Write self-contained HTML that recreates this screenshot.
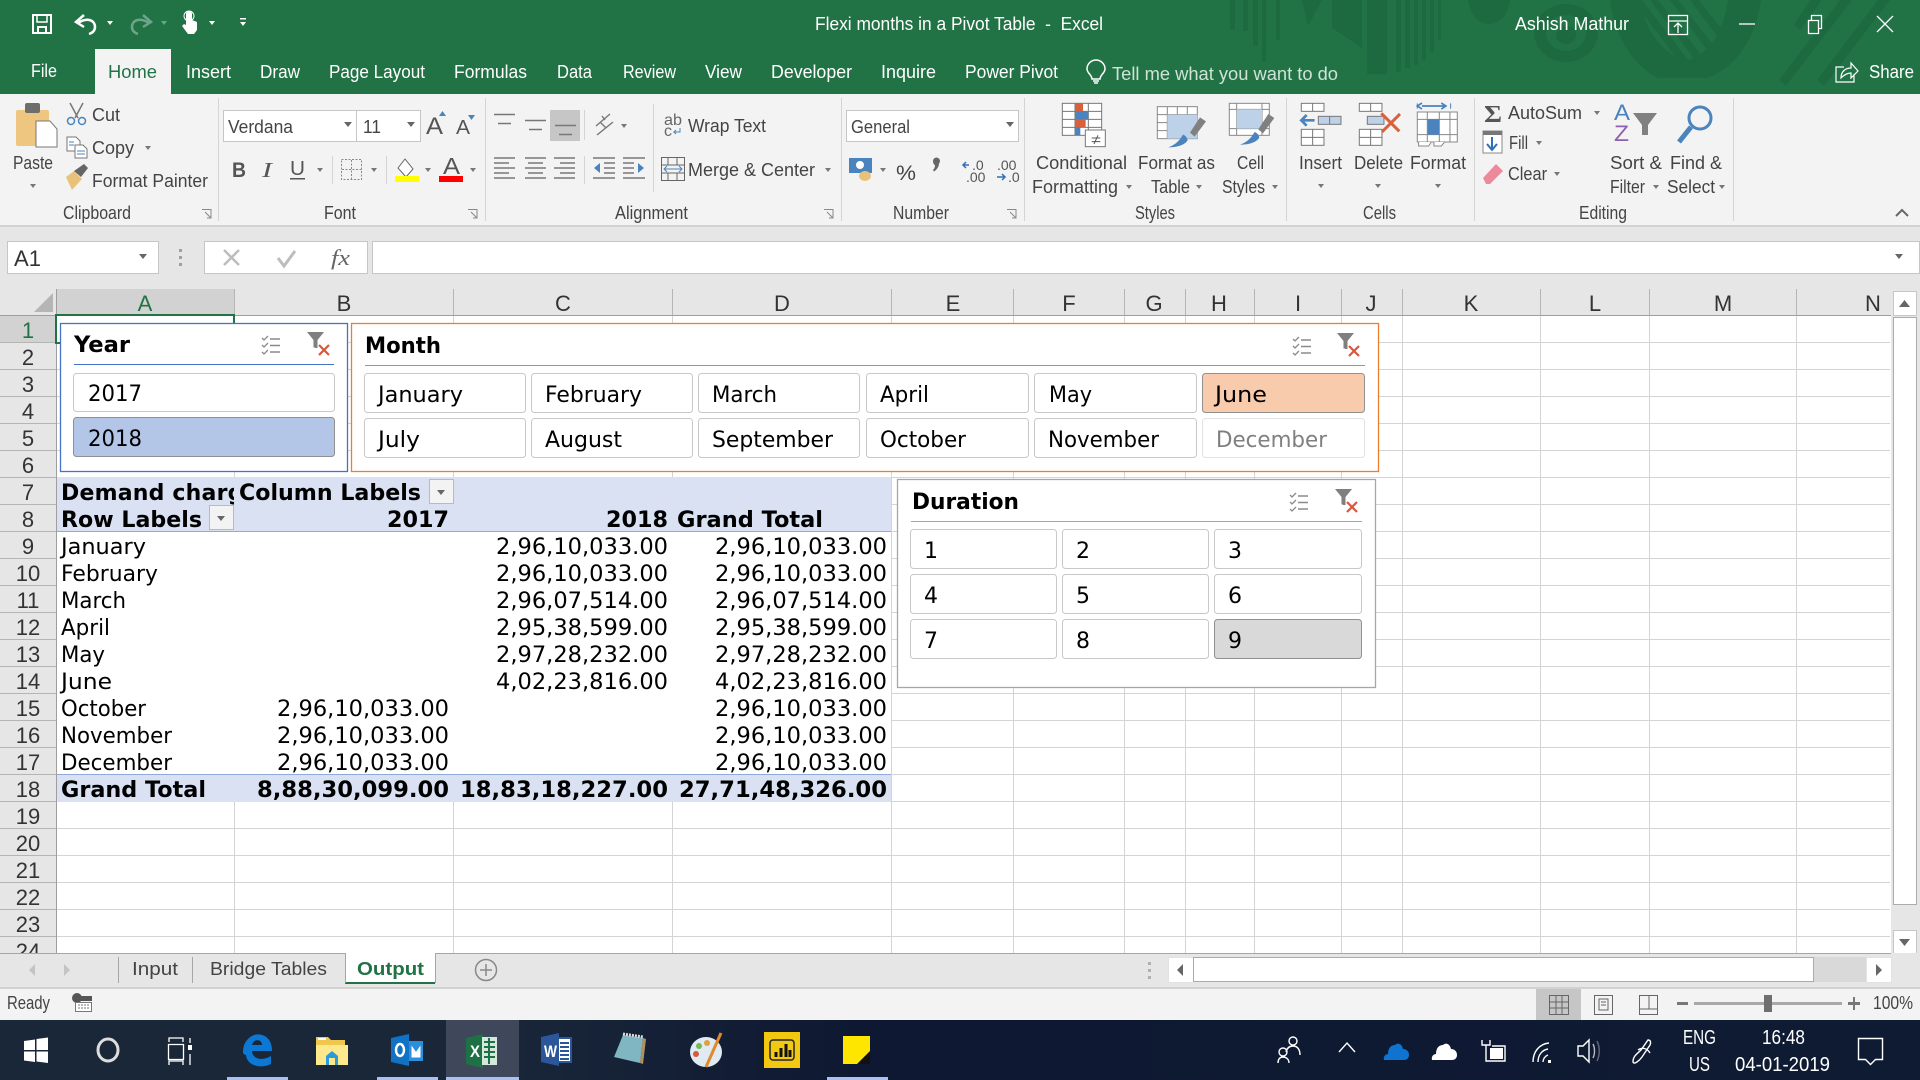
<!DOCTYPE html>
<html lang="en"><head><meta charset="utf-8"><title>Flexi months in a Pivot Table - Excel</title>
<style>
html,body{margin:0;padding:0;width:1920px;height:1080px;overflow:hidden;background:#fff}
svg{display:block;position:absolute;left:0;top:0}
text{white-space:pre}
.u{font:18px "Liberation Sans",sans-serif;fill:#444}
.w{font:18px "Liberation Sans",sans-serif;fill:#fff}
.t{font:20px "Liberation Sans",sans-serif;fill:#fff}
.h{font:22px "Liberation Sans",sans-serif;fill:#333}
.v{font:22px "DejaVu Sans",sans-serif;fill:#000}
.b{font:bold 22px "DejaVu Sans",sans-serif;fill:#000}
.ar{fill:#666}
</style></head><body>
<svg width="1920" height="1080" viewBox="0 0 1920 1080" xmlns="http://www.w3.org/2000/svg">
<defs>
<clipPath id="cA"><rect x="58" y="480" width="176" height="27"/></clipPath>
<clipPath id="cT"><rect x="0" y="0" width="1920" height="94"/></clipPath>
<g id="ck" fill="none" stroke="#8a8a8a" stroke-width="1.3"><path d="M0 3l2 2 4-4M0 10l2 2 4-4M0 17l2 2 4-4"/><path d="M8 4h10M8 10.500h10M8 17h10" stroke-width="1.500"/></g>
<g id="fx"><path d="M0 0h17l-6.500 8v8h-4v-8z" fill="#7f7f7f"/><path d="M5 8v8h3" fill="none" stroke="#fff" stroke-width="1"/><path d="M12 13l10 10M22 13l-10 10" stroke="#d9583b" stroke-width="2.200" fill="none"/></g>
<g id="dn"><path d="M0 0h8l-4 5z"/></g>
<g id="sd"><path d="M0 0h6l-3 4z" fill="#777"/></g>
<g id="sw"><path d="M0 0h6l-3 4z" fill="#fff"/></g>
</defs>

<!-- title bar -->
<rect width="1920" height="94" fill="#217346"/>
<g clip-path="url(#cT)" fill="#1e6a40">
<rect x="1230" y="0" width="5" height="30"/><rect x="1243" y="0" width="5" height="31"/><rect x="1253" y="0" width="5" height="46"/><rect x="1262" y="0" width="4" height="62"/><rect x="1276" y="0" width="4" height="40"/>
<path d="M1302 0h20l-14 26zM1332 0h30v48l-30-20z"/><rect x="1367" y="0" width="20" height="74"/>
<rect x="1396" y="0" width="5" height="72"/><rect x="1405" y="0" width="5" height="68"/><rect x="1414" y="0" width="4" height="65"/><rect x="1422" y="0" width="4" height="60"/><rect x="1430" y="0" width="4" height="52"/><rect x="1438" y="0" width="3" height="40"/>
<path d="M1468 0h42c-2 16-10 24-21 24s-19-9-21-24z"/>
<path fill-rule="evenodd" d="M1566 4a32 29 0 1 0 .1 0zM1566 15a20 18 0 1 1-.1 0zM1566 26a10 9 0 1 0 .1 0z"/>
<path d="M1610 0h30c5 28 18 50 45 61 27-8 38-30 43-61h33c-5 40-27 68-53 78h-50c-24-12-44-42-48-78z"/>
<path d="M1632 0h10l60 78h-10zM1650 0h8l52 66-6 6zM1670 0h8l44 56-6 6zM1690 0h9l36 46-6 6z"/>
<path d="M1810 0h12l-22 30-6-5zM1840 0h12l-66 86-7-6zM1878 0h12l-66 86-7-6z"/>
</g>
<!-- QAT -->
<g fill="none" stroke="#fff" stroke-width="2">
<path d="M33 15h18v18h-18zM38 33v-6h8v6"/><rect x="37" y="15" width="10" height="7" stroke-width="1.500"/>
<path d="M78 23c9-6 17-3 17 4 0 4-3 6-6 7" stroke-width="2.500"/><path d="M84 15l-8 7 8 5" stroke-width="2.500"/>
<g stroke="#6da58a"><path d="M149 23c-9-6-17-3-17 4 0 4 3 6 6 7" stroke-width="2.500"/><path d="M143 15l8 7-8 5" stroke-width="2.500"/></g>
</g>
<path d="M186 14a3 3 0 0 1 6 0v6l5 2v8l-3 4h-6l-6-8 2-2 2 1z" fill="#fff"/><circle cx="189" cy="16" r="5" fill="none" stroke="#fff"/>
<use href="#sw" x="107" y="21"/><use href="#sw" x="209" y="21"/><use href="#sw" x="240" y="22"/><rect x="240" y="18" width="6" height="1.500" fill="#fff"/>
<use href="#sw" x="161" y="21" opacity=".35"/>
<text class="w" x="815" y="30" textLength="288" lengthAdjust="spacingAndGlyphs">Flexi months in a Pivot Table  -  Excel</text>
<text class="w" x="1515" y="30" textLength="114" lengthAdjust="spacingAndGlyphs">Ashish Mathur</text>
<g fill="none" stroke="#fff" stroke-width="1.300">
<rect x="1668.500" y="15.500" width="19" height="19"/><path d="M1669 21h18M1678 33v-9M1674 27l4-4 4 4"/>
<path d="M1739 24h16"/>
<path d="M1808.500 20.500h10v13h-10zM1811.500 20v-4.500h10v13h-3"/>
<path d="M1877 16l16 16M1893 16l-16 16"/>
</g>
<!-- tabs -->
<rect x="95" y="49" width="76" height="45" fill="#f3f3f3"/>
<g class="tabs">
<text class="w" x="31" y="77" textLength="26" lengthAdjust="spacingAndGlyphs">File</text>
<text class="u" x="108" y="78" textLength="49" lengthAdjust="spacingAndGlyphs" style="fill:#217346">Home</text>
<text class="w" x="186" y="78" textLength="45" lengthAdjust="spacingAndGlyphs">Insert</text>
<text class="w" x="260" y="78" textLength="40" lengthAdjust="spacingAndGlyphs">Draw</text>
<text class="w" x="329" y="78" textLength="96" lengthAdjust="spacingAndGlyphs">Page Layout</text>
<text class="w" x="454" y="78" textLength="73" lengthAdjust="spacingAndGlyphs">Formulas</text>
<text class="w" x="557" y="78" textLength="35" lengthAdjust="spacingAndGlyphs">Data</text>
<text class="w" x="623" y="78" textLength="53" lengthAdjust="spacingAndGlyphs">Review</text>
<text class="w" x="705" y="78" textLength="37" lengthAdjust="spacingAndGlyphs">View</text>
<text class="w" x="771" y="78" textLength="81" lengthAdjust="spacingAndGlyphs">Developer</text>
<text class="w" x="881" y="78" textLength="55" lengthAdjust="spacingAndGlyphs">Inquire</text>
<text class="w" x="965" y="78" textLength="93" lengthAdjust="spacingAndGlyphs">Power Pivot</text>
<text class="w" x="1112" y="80" textLength="226" lengthAdjust="spacingAndGlyphs" style="fill:#cfe3d7">Tell me what you want to do</text>
<text class="w" x="1869" y="78" textLength="45" lengthAdjust="spacingAndGlyphs">Share</text>
</g>
<g fill="none" stroke="#fff" stroke-width="1.500">
<path d="M1092 79c0-4-5-6-5-10a9 9 0 0 1 18 0c0 4-5 6-5 10zM1093 81h6M1094 83h4"/>
<path d="M1844 67h-8v15h18v-8M1841 78c0-7 5-10 10-10v-5l7 8-7 7v-5c-4 0-7 2-10 5z" stroke-width="1.200"/>
</g>

<!-- ribbon -->
<rect y="94" width="1920" height="131" fill="#f3f3f3"/>
<rect y="225" width="1920" height="2" fill="#d2d2d2"/>
<g fill="#d4d4d4">
<rect x="218" y="98" width="1" height="123"/><rect x="485" y="98" width="1" height="123"/><rect x="841" y="98" width="1" height="123"/><rect x="1024" y="98" width="1" height="123"/><rect x="1286" y="98" width="1" height="123"/><rect x="1474" y="98" width="1" height="123"/><rect x="1733" y="98" width="1" height="123"/>
<rect x="584" y="110" width="1" height="30"/><rect x="653" y="104" width="1" height="88"/><rect x="332" y="156" width="1" height="28"/><rect x="386" y="156" width="1" height="28"/><rect x="584" y="156" width="1" height="28"/>
</g>
<!-- clipboard -->
<rect x="16" y="110" width="33" height="36" rx="2" fill="#efc67f"/><rect x="25" y="103" width="15" height="10" rx="2" fill="#6d6d6d"/>
<path d="M36 121h14l7 8v18h-21z" fill="#fff" stroke="#777"/>
<text class="u" x="13" y="169" textLength="40" lengthAdjust="spacingAndGlyphs">Paste</text><use href="#sd" x="30" y="184"/>
<g fill="none" stroke="#777" stroke-width="1.500"><path d="M70 103l8 15M83 103l-8 15"/></g>
<g fill="none" stroke="#4a83bd" stroke-width="1.500"><circle cx="71" cy="121" r="3.500"/><circle cx="82" cy="121" r="3.500"/></g>
<text class="u" x="92" y="121" textLength="28" lengthAdjust="spacingAndGlyphs">Cut</text>
<g fill="#fff" stroke="#777"><path d="M67 137h9l4 4v10h-13z"/><path d="M75 145h8l4 4v9h-12z"/></g><path d="M69 142h5M69 145h5M77 151h8M77 154h8" stroke="#4a83bd"/>
<text class="u" x="92" y="154" textLength="42" lengthAdjust="spacingAndGlyphs">Copy</text><use href="#sd" x="145" y="146"/>
<path d="M66 177l8-6 8 8-10 11z" fill="#e8c27a"/><path d="M74 171l10-7 4 4-7 9z" fill="#666"/>
<text class="u" x="92" y="187" textLength="116" lengthAdjust="spacingAndGlyphs">Format Painter</text>
<text class="u" x="63" y="219" textLength="68" lengthAdjust="spacingAndGlyphs">Clipboard</text>
<g fill="none" stroke="#888"><path d="M202 209.500h9v9M205 212l6 6M211 214v4h-4"/><path d="M468 209.500h9v9M471 212l6 6M477 214v4h-4"/><path d="M824 209.500h9v9M827 212l6 6M833 214v4h-4"/><path d="M1007 209.500h9v9M1010 212l6 6M1016 214v4h-4"/></g>
<!-- font -->
<rect x="223.500" y="110.500" width="133" height="31" fill="#fff" stroke="#c6c6c6"/><rect x="356.500" y="110.500" width="64" height="31" fill="#fff" stroke="#c6c6c6"/>
<text class="u" x="228" y="133" textLength="65" lengthAdjust="spacingAndGlyphs">Verdana</text><text class="u" x="363" y="133" textLength="18" lengthAdjust="spacingAndGlyphs">11</text>
<use href="#dn" x="344" y="122" class="ar"/><use href="#dn" x="407" y="122" class="ar"/>
<text x="426" y="134" style="font:24px 'Liberation Sans',sans-serif;fill:#555" textLength="17" lengthAdjust="spacingAndGlyphs">A</text><path d="M439 116h7l-3.500-5z" fill="#4a83bd"/>
<text x="456" y="134" style="font:20px 'Liberation Sans',sans-serif;fill:#555" textLength="14" lengthAdjust="spacingAndGlyphs">A</text><path d="M468 115h7l-3.500 5z" fill="#4a83bd"/>
<text x="232" y="177" style="font:bold 21px 'Liberation Sans',sans-serif;fill:#555" textLength="14" lengthAdjust="spacingAndGlyphs">B</text>
<text x="262" y="177" style="font:italic 21px 'Liberation Serif',serif;fill:#555" textLength="10" lengthAdjust="spacingAndGlyphs">I</text>
<text x="290" y="175" style="font:20px 'Liberation Sans',sans-serif;fill:#555" textLength="15" lengthAdjust="spacingAndGlyphs">U</text><rect x="290" y="178" width="15" height="1.500" fill="#555"/>
<use href="#sd" x="317" y="168"/><use href="#sd" x="371" y="168"/><use href="#sd" x="425" y="168"/><use href="#sd" x="470" y="168"/>
<path d="M341.500 159.500h20v20h-20zM351.500 160v20M342 169.500h20" fill="none" stroke="#888" stroke-dasharray="2 1.500"/>
<path d="M398 168l7-9 8 10-7 8z" fill="#fff" stroke="#666"/><rect x="395" y="176" width="24" height="6" fill="#ff0"/>
<text x="443" y="174" style="font:23px 'Liberation Sans',sans-serif;fill:#555" textLength="17" lengthAdjust="spacingAndGlyphs">A</text><rect x="439" y="176" width="24" height="6" fill="#f00"/>
<text class="u" x="324" y="219" textLength="32" lengthAdjust="spacingAndGlyphs">Font</text>
<!-- alignment -->
<rect x="550" y="110" width="30" height="31" fill="#c6c6c6"/>
<g stroke="#777" stroke-width="1.400" fill="none">
<path d="M494 114.500h21M498 123.500h13"/><path d="M525 120.500h21M529 129.500h13"/><path d="M555 125.500h21M559 134.500h13"/>
<path d="M494 158h21M494 163h15M494 168h21M494 173h15M494 178h21"/><path d="M525 158h21M528 163h15M525 168h21M528 173h15M525 178h21"/><path d="M554 158h21M560 163h15M554 168h21M560 173h15M554 178h21"/>
<path d="M593 158h22M604 163h11M604 168h11M604 173h11M593 178h22"/><path d="M623 158h22M623 163h11M623 168h11M623 173h11M623 178h22"/>
<path d="M596 126l14-12M600 122l6 6M597 135l16-13M602 116l3 4"/>
<path d="M661.500 157.500h23v23h-23zM661 165h24M661 173h24M668 158v7M677 158v7M668 173v7M677 173v7" stroke="#666" stroke-width="1"/>
</g>
<path d="M594 168l6-5v10zM644 168l-6-5v10z" fill="#4a83bd"/>
<path d="M664 169h18M667 166l-3 3 3 3M679 166l3 3-3 3" stroke="#4a83bd" fill="none"/>
<use href="#sd" x="621" y="124"/><use href="#sd" x="825" y="168"/>
<text x="664" y="125" style="font:16px 'Liberation Sans',sans-serif;fill:#666" textLength="18" lengthAdjust="spacingAndGlyphs">ab</text><text x="664" y="136" style="font:16px 'Liberation Sans',sans-serif;fill:#666">c</text><path d="M680 128v4h-6l2-2m-2 2l2 2" stroke="#4a83bd" fill="none"/>
<text class="u" x="688" y="132" textLength="78" lengthAdjust="spacingAndGlyphs">Wrap Text</text>
<text class="u" x="688" y="176" textLength="127" lengthAdjust="spacingAndGlyphs">Merge &amp; Center</text>
<text class="u" x="615" y="219" textLength="73" lengthAdjust="spacingAndGlyphs">Alignment</text>
<!-- number -->
<rect x="846.500" y="110.500" width="172" height="31" fill="#fff" stroke="#c6c6c6"/>
<text class="u" x="851" y="133" textLength="59" lengthAdjust="spacingAndGlyphs">General</text><use href="#dn" x="1006" y="122" class="ar"/>
<rect x="849" y="158" width="23" height="15" fill="#4a83bd"/><circle cx="860" cy="165" r="4" fill="#fff"/><ellipse cx="865" cy="176" rx="6" ry="5" fill="#e8c27a"/>
<use href="#sd" x="880" y="168"/>
<text class="u" x="896" y="180" textLength="20" lengthAdjust="spacingAndGlyphs" style="font-size:21px">%</text>
<path d="M933 161a3.500 3.500 0 1 1 6 2.500c0 3-2 6-5 8l-1-1.500c1.500-1.500 2-3 2-5-1 0-2-2-2-4z" fill="#666"/>
<text x="972" y="170" style="font:14px 'Liberation Sans',sans-serif;fill:#555">.0</text><text x="966" y="182" style="font:14px 'Liberation Sans',sans-serif;fill:#555">.00</text>
<path d="M969 165h-5m2-3l-3 3 3 3" stroke="#2f6fb5" stroke-width="1.500" fill="none"/>
<text x="997" y="170" style="font:14px 'Liberation Sans',sans-serif;fill:#555">.00</text><text x="1008" y="182" style="font:14px 'Liberation Sans',sans-serif;fill:#555">.0</text>
<path d="M997 177h8m-3-3l3 3-3 3" stroke="#2f6fb5" stroke-width="1.500" fill="none"/>
<text class="u" x="893" y="219" textLength="56" lengthAdjust="spacingAndGlyphs">Number</text>
<!-- styles -->
<g transform="translate(1020 94) scale(.3333)">
<g fill="#fff" stroke="#777" stroke-width="3"><rect x="127" y="28" width="118" height="96"/><path d="M127 52h118M127 76h118M127 100h118M165 28v96M205 28v96" fill="none"/></g>
<rect x="165" y="28" width="24" height="24" fill="#d9603d"/><rect x="165" y="52" width="40" height="24" fill="#4a83bd"/><rect x="165" y="76" width="32" height="24" fill="#d9603d"/><rect x="165" y="100" width="16" height="24" fill="#4a83bd"/>
<rect x="196" y="108" width="60" height="50" fill="#fff" stroke="#777" stroke-width="3"/><path d="M215 143h26M215 132h26M222 150l12-26" stroke="#555" stroke-width="3"/>
<g fill="#fff" stroke="#888" stroke-width="3"><rect x="412" y="38" width="120" height="96"/><path d="M412 62h120M412 86h120M412 110h120M442 38v96M472 38v96M502 38v96" fill="none"/></g>
<rect x="442" y="62" width="90" height="72" fill="#bdd1e8"/>
<path d="M540 70l18 12-34 46-14-12z" fill="#808080"/><path d="M445 160c16-6 30-14 44-38 8 2 12 10 14 16-6 14-30 22-58 22z" fill="#4a83bd"/>
<g fill="#fff" stroke="#888" stroke-width="3"><rect x="628" y="28" width="120" height="96"/><path d="M628 46h120M650 28v96M726 28v96M628 104h120" fill="none"/></g>
<rect x="650" y="46" width="76" height="58" fill="#bdd1e8"/>
<path d="M745 60l18 12-34 46-14-12z" fill="#808080"/><path d="M660 152c16-6 30-14 44-38 8 2 12 10 14 16-6 14-30 22-58 22z" fill="#4a83bd"/>
<g fill="#fff" stroke="#777" stroke-width="3"><rect x="844" y="28" width="68" height="24"/><path d="M878 28v24" fill="none"/><rect x="844" y="106" width="68" height="48"/><path d="M878 106v48M844 130h68" fill="none"/></g>
<rect x="895" y="67" width="68" height="24" fill="#bdd1e8" stroke="#777" stroke-width="3"/><path d="M929 67v24" stroke="#777" stroke-width="3"/>
<path d="M884 79h-38m14-16l-16 16 16 16" fill="none" stroke="#4a83bd" stroke-width="8"/>
<g fill="#fff" stroke="#777" stroke-width="3"><rect x="1018" y="28" width="68" height="24"/><path d="M1052 28v24" fill="none"/><rect x="1018" y="106" width="68" height="48"/><path d="M1052 106v48M1018 130h68" fill="none"/></g>
<rect x="1042" y="67" width="50" height="24" fill="#bdd1e8" stroke="#777" stroke-width="3"/>
<path d="M1084 58l54 54M1140 60l-54 54" stroke="#d9603d" stroke-width="9" fill="none"/>
<path d="M1192 44V28M1292 44V28" stroke="#4a83bd" stroke-width="3"/><path d="M1206 36h72m-14-9l14 9-14 9m-58-18l-14 9 14 9" stroke="#4a83bd" stroke-width="5" fill="none"/>
<g fill="#fff" stroke="#888" stroke-width="3"><rect x="1192" y="54" width="120" height="90"/><path d="M1192 76h120M1192 122h120M1222 54v90M1258 54v90M1290 54v90" fill="none"/></g>
<rect x="1223" y="76" width="35" height="46" fill="#4a83bd"/><path d="M1196 144v12h30l8-12M1242 144v12h22l10-12" fill="#fff" stroke="#888" stroke-width="3"/>
</g>
<text class="u" x="1036" y="169" textLength="91" lengthAdjust="spacingAndGlyphs">Conditional</text>
<text class="u" x="1032" y="193" textLength="86" lengthAdjust="spacingAndGlyphs">Formatting</text><use href="#sd" x="1126" y="185"/>
<text class="u" x="1138" y="169" textLength="77" lengthAdjust="spacingAndGlyphs">Format as</text>
<text class="u" x="1151" y="193" textLength="39" lengthAdjust="spacingAndGlyphs">Table</text><use href="#sd" x="1196" y="185"/>
<text class="u" x="1237" y="169" textLength="27" lengthAdjust="spacingAndGlyphs">Cell</text>
<text class="u" x="1222" y="193" textLength="43" lengthAdjust="spacingAndGlyphs">Styles</text><use href="#sd" x="1272" y="185"/>
<text class="u" x="1135" y="219" textLength="40" lengthAdjust="spacingAndGlyphs">Styles</text>
<!-- cells -->
<text class="u" x="1299" y="169" textLength="43" lengthAdjust="spacingAndGlyphs">Insert</text><use href="#sd" x="1318" y="184"/>
<text class="u" x="1354" y="169" textLength="49" lengthAdjust="spacingAndGlyphs">Delete</text><use href="#sd" x="1375" y="184"/>
<text class="u" x="1410" y="169" textLength="56" lengthAdjust="spacingAndGlyphs">Format</text><use href="#sd" x="1435" y="184"/>
<text class="u" x="1363" y="219" textLength="33" lengthAdjust="spacingAndGlyphs">Cells</text>
<!-- editing -->
<text x="1484" y="122" style="font:bold 24px 'Liberation Serif',serif;fill:#555" textLength="18" lengthAdjust="spacingAndGlyphs">Σ</text>
<text class="u" x="1508" y="119" textLength="74" lengthAdjust="spacingAndGlyphs">AutoSum</text><use href="#sd" x="1594" y="111"/>
<rect x="1483" y="131" width="19" height="22" fill="#fff" stroke="#888"/><rect x="1483" y="131" width="19" height="4" fill="#777"/><path d="M1492 137v12m-5-5l5 6 5-6" stroke="#2f6fb5" stroke-width="2" fill="none"/>
<text class="u" x="1509" y="149" textLength="19" lengthAdjust="spacingAndGlyphs">Fill</text><use href="#sd" x="1536" y="141"/>
<path d="M1483 178l13-14 7 7-13 13h-4z" fill="#ec8a9b"/>
<text class="u" x="1508" y="180" textLength="39" lengthAdjust="spacingAndGlyphs">Clear</text><use href="#sd" x="1554" y="172"/>
<text x="1614" y="120" style="font:22px 'Liberation Sans',sans-serif;fill:#4a83bd" textLength="16" lengthAdjust="spacingAndGlyphs">A</text>
<text x="1614" y="141" style="font:22px 'Liberation Sans',sans-serif;fill:#8f5fb0" textLength="15" lengthAdjust="spacingAndGlyphs">Z</text>
<path d="M1633 113h24l-9 12v10h-6v-10z" fill="#808080"/>
<circle cx="1700" cy="118" r="11" fill="none" stroke="#4a83bd" stroke-width="3"/><path d="M1691 127l-12 15" stroke="#4a83bd" stroke-width="5"/>
<text class="u" x="1610" y="169" textLength="52" lengthAdjust="spacingAndGlyphs">Sort &amp;</text><text class="u" x="1670" y="169" textLength="52" lengthAdjust="spacingAndGlyphs">Find &amp;</text>
<text class="u" x="1610" y="193" textLength="35" lengthAdjust="spacingAndGlyphs">Filter</text><use href="#sd" x="1653" y="185"/>
<text class="u" x="1667" y="193" textLength="48" lengthAdjust="spacingAndGlyphs">Select</text><use href="#sd" x="1719" y="185"/>
<text class="u" x="1579" y="219" textLength="48" lengthAdjust="spacingAndGlyphs">Editing</text>
<path d="M1896 216l6-6 6 6" stroke="#666" stroke-width="2" fill="none"/>

<!-- formula bar -->
<rect y="227" width="1920" height="62" fill="#e6e6e6"/>
<rect x="7.500" y="241.500" width="151" height="32" fill="#fff" stroke="#c6c6c6"/>
<text class="h" x="14" y="266" textLength="27" lengthAdjust="spacingAndGlyphs">A1</text><use href="#dn" x="139" y="254" class="ar"/>
<g fill="#a0a0a0"><rect x="179" y="249" width="3" height="3"/><rect x="179" y="256" width="3" height="3"/><rect x="179" y="263" width="3" height="3"/></g>
<rect x="204.500" y="241.500" width="163" height="32" fill="#fff" stroke="#c6c6c6"/>
<path d="M224 250l15 15M239 250l-15 15" stroke="#bdbdbd" stroke-width="2.500"/><path d="M278 258l6 8 11-15" stroke="#bdbdbd" stroke-width="3" fill="none"/>
<text x="331" y="265" style="font:italic 22px 'Liberation Serif',serif;fill:#666" textLength="19" lengthAdjust="spacingAndGlyphs">fx</text>
<rect x="372.500" y="241.500" width="1547" height="32" fill="#fff" stroke="#c6c6c6"/>
<use href="#dn" x="1895" y="254" class="ar"/>

<!-- sheet -->
<rect x="0" y="289" width="1920" height="664" fill="#fff"/>
<g stroke="#d4d4d4">
<path d="M234.500 316V953M453.500 316V953M672.500 316V953M891.500 316V953M1013.500 316V953M1124.500 316V953M1185.500 316V953M1254.500 316V953M1341.500 316V953M1402.500 316V953M1540.500 316V953M1649.500 316V953M1796.500 316V953"/>
<path d="M57 342.500H1890M57 369.500H1890M57 396.500H1890M57 423.500H1890M57 450.500H1890M57 477.500H1890M57 504.500H1890M57 531.500H1890M57 558.500H1890M57 585.500H1890M57 612.500H1890M57 639.500H1890M57 666.500H1890M57 693.500H1890M57 720.500H1890M57 747.500H1890M57 774.500H1890M57 801.500H1890M57 828.500H1890M57 855.500H1890M57 882.500H1890M57 909.500H1890M57 936.500H1890"/>
</g>
<!-- headers -->
<rect x="0" y="289" width="1891" height="26" fill="#e6e6e6"/><rect x="0" y="289" width="56" height="664" fill="#e6e6e6"/>
<rect x="56" y="289" width="178" height="26" fill="#d2d2d2"/><rect x="0" y="316" width="56" height="27" fill="#d2d2d2"/>
<rect x="0" y="315" width="1891" height="1" fill="#9e9e9e"/><rect x="56" y="289" width="1" height="664" fill="#9e9e9e"/>
<path d="M53 293v19h-19z" fill="#b5b5b5"/>
<g stroke="#b5b5b5"><path d="M234.500 289v26M453.500 289v26M672.500 289v26M891.500 289v26M1013.500 289v26M1124.500 289v26M1185.500 289v26M1254.500 289v26M1341.500 289v26M1402.500 289v26M1540.500 289v26M1649.500 289v26M1796.500 289v26"/>
<path d="M0 342.500h56M0 369.500h56M0 396.500h56M0 423.500h56M0 450.500h56M0 477.500h56M0 504.500h56M0 531.500h56M0 558.500h56M0 585.500h56M0 612.500h56M0 639.500h56M0 666.500h56M0 693.500h56M0 720.500h56M0 747.500h56M0 774.500h56M0 801.500h56M0 828.500h56M0 855.500h56M0 882.500h56M0 909.500h56M0 936.500h56"/></g>
<g text-anchor="middle">
<text class="h" x="145" y="311" style="fill:#217346">A</text><text class="h" x="344" y="311">B</text><text class="h" x="563" y="311">C</text><text class="h" x="782" y="311">D</text><text class="h" x="953" y="311">E</text><text class="h" x="1069" y="311">F</text><text class="h" x="1154" y="311">G</text><text class="h" x="1219" y="311">H</text><text class="h" x="1298" y="311">I</text><text class="h" x="1371" y="311">J</text><text class="h" x="1471" y="311">K</text><text class="h" x="1595" y="311">L</text><text class="h" x="1723" y="311">M</text><text class="h" x="1873" y="311">N</text>
</g>
<g text-anchor="middle" transform="translate(0 1)">
<text class="h" x="28" y="337" style="fill:#217346">1</text><text class="h" x="28" y="364">2</text><text class="h" x="28" y="391">3</text><text class="h" x="28" y="418">4</text><text class="h" x="28" y="445">5</text><text class="h" x="28" y="472">6</text><text class="h" x="28" y="499">7</text><text class="h" x="28" y="526">8</text><text class="h" x="28" y="553">9</text><text class="h" x="28" y="580">10</text><text class="h" x="28" y="607">11</text><text class="h" x="28" y="634">12</text><text class="h" x="28" y="661">13</text><text class="h" x="28" y="688">14</text><text class="h" x="28" y="715">15</text><text class="h" x="28" y="742">16</text><text class="h" x="28" y="769">17</text><text class="h" x="28" y="796">18</text><text class="h" x="28" y="823">19</text><text class="h" x="28" y="850">20</text><text class="h" x="28" y="877">21</text><text class="h" x="28" y="904">22</text><text class="h" x="28" y="931">23</text><text class="h" x="28" y="958">24</text>
</g>
<!-- selected cell -->
<rect x="56" y="315" width="178" height="28" fill="none" stroke="#217346" stroke-width="2"/>

<!-- pivot -->
<rect x="57" y="477" width="834" height="55" fill="#d9e1f2"/>
<rect x="57" y="532" width="834" height="243" fill="#fff"/>
<rect x="57" y="775" width="834" height="27" fill="#d9e1f2"/>
<rect x="57" y="531" width="834" height="1" fill="#8ea9db"/><rect x="57" y="774" width="834" height="1" fill="#8ea9db"/>
<rect x="429.500" y="479.500" width="24" height="24" fill="#f3f3f3" stroke="#b5bac4"/><use href="#dn" x="437" y="490" class="ar"/>
<rect x="209.500" y="505.500" width="24" height="24" fill="#f3f3f3" stroke="#b5bac4"/><use href="#dn" x="217" y="516" class="ar"/>
<g transform="translate(0 1)">
<text class="b" x="61" y="499" clip-path="url(#cA)" style="letter-spacing:.2px">Demand charges</text>
<text class="b" x="239" y="499" textLength="182" lengthAdjust="spacingAndGlyphs">Column Labels</text>
<text class="b" x="61" y="526" textLength="141" lengthAdjust="spacingAndGlyphs">Row Labels</text>
<text class="b" x="387" y="526" textLength="62" lengthAdjust="spacingAndGlyphs">2017</text>
<text class="b" x="606" y="526" textLength="62" lengthAdjust="spacingAndGlyphs">2018</text>
<text class="b" x="677" y="526" textLength="146" lengthAdjust="spacingAndGlyphs">Grand Total</text>

<text class="v" x="61" y="553" textLength="85" lengthAdjust="spacingAndGlyphs">January</text>
<text class="v" x="61" y="580" textLength="97" lengthAdjust="spacingAndGlyphs">February</text>
<text class="v" x="61" y="607" textLength="65" lengthAdjust="spacingAndGlyphs">March</text>
<text class="v" x="61" y="634" textLength="49" lengthAdjust="spacingAndGlyphs">April</text>
<text class="v" x="61" y="661" textLength="44" lengthAdjust="spacingAndGlyphs">May</text>
<text class="v" x="61" y="688" textLength="51" lengthAdjust="spacingAndGlyphs">June</text>
<text class="v" x="61" y="715" textLength="85" lengthAdjust="spacingAndGlyphs">October</text>
<text class="v" x="61" y="742" textLength="111" lengthAdjust="spacingAndGlyphs">November</text>
<text class="v" x="61" y="769" textLength="111" lengthAdjust="spacingAndGlyphs">December</text>
<text class="b" x="61" y="796" textLength="145" lengthAdjust="spacingAndGlyphs">Grand Total</text>

<text class="v" x="496" y="553" textLength="172" lengthAdjust="spacingAndGlyphs">2,96,10,033.00</text><text class="v" x="715" y="553" textLength="172" lengthAdjust="spacingAndGlyphs">2,96,10,033.00</text>
<text class="v" x="496" y="580" textLength="172" lengthAdjust="spacingAndGlyphs">2,96,10,033.00</text><text class="v" x="715" y="580" textLength="172" lengthAdjust="spacingAndGlyphs">2,96,10,033.00</text>
<text class="v" x="496" y="607" textLength="172" lengthAdjust="spacingAndGlyphs">2,96,07,514.00</text><text class="v" x="715" y="607" textLength="172" lengthAdjust="spacingAndGlyphs">2,96,07,514.00</text>
<text class="v" x="496" y="634" textLength="172" lengthAdjust="spacingAndGlyphs">2,95,38,599.00</text><text class="v" x="715" y="634" textLength="172" lengthAdjust="spacingAndGlyphs">2,95,38,599.00</text>
<text class="v" x="496" y="661" textLength="172" lengthAdjust="spacingAndGlyphs">2,97,28,232.00</text><text class="v" x="715" y="661" textLength="172" lengthAdjust="spacingAndGlyphs">2,97,28,232.00</text>
<text class="v" x="496" y="688" textLength="172" lengthAdjust="spacingAndGlyphs">4,02,23,816.00</text><text class="v" x="715" y="688" textLength="172" lengthAdjust="spacingAndGlyphs">4,02,23,816.00</text>
<text class="v" x="277" y="715" textLength="172" lengthAdjust="spacingAndGlyphs">2,96,10,033.00</text><text class="v" x="715" y="715" textLength="172" lengthAdjust="spacingAndGlyphs">2,96,10,033.00</text>
<text class="v" x="277" y="742" textLength="172" lengthAdjust="spacingAndGlyphs">2,96,10,033.00</text><text class="v" x="715" y="742" textLength="172" lengthAdjust="spacingAndGlyphs">2,96,10,033.00</text>
<text class="v" x="277" y="769" textLength="172" lengthAdjust="spacingAndGlyphs">2,96,10,033.00</text><text class="v" x="715" y="769" textLength="172" lengthAdjust="spacingAndGlyphs">2,96,10,033.00</text>
<text class="b" x="257" y="796" textLength="192" lengthAdjust="spacingAndGlyphs">8,88,30,099.00</text>
<text class="b" x="460" y="796" textLength="208" lengthAdjust="spacingAndGlyphs">18,83,18,227.00</text>
<text class="b" x="679" y="796" textLength="208" lengthAdjust="spacingAndGlyphs">27,71,48,326.00</text>
</g>

<!-- Year slicer -->
<rect x="60.500" y="323.500" width="287" height="148" fill="#fff" stroke="#4472c4" stroke-width="1.300"/>
<text class="b" x="74" y="352" textLength="56" lengthAdjust="spacingAndGlyphs">Year</text>
<use href="#ck" x="262" y="335"/><use href="#fx" x="307" y="332"/>
<rect x="74" y="364" width="260" height="1" fill="#4472c4"/>
<rect x="73.500" y="373.500" width="261" height="38" rx="3" fill="#fff" stroke="#c8c8c8"/>
<rect x="73.500" y="417.500" width="261" height="39" rx="3" fill="#b4c6e7" stroke="#909090"/>
<text class="v" x="88" y="401" textLength="54" lengthAdjust="spacingAndGlyphs">2017</text>
<text class="v" x="88" y="446" textLength="54" lengthAdjust="spacingAndGlyphs">2018</text>

<!-- Month slicer -->
<rect x="351.500" y="323.500" width="1027" height="148" fill="#fff" stroke="#ed7d31" stroke-width="1.300"/>
<text class="b" x="365" y="353" textLength="76" lengthAdjust="spacingAndGlyphs">Month</text>
<use href="#ck" x="1293" y="336"/><use href="#fx" x="1337" y="333"/>
<rect x="365" y="365" width="1000" height="1" fill="#ed7d31"/>
<g fill="#fff" stroke="#c8c8c8">
<rect x="364.500" y="373.500" width="161" height="39" rx="3"/><rect x="531.500" y="373.500" width="161" height="39" rx="3"/><rect x="698.500" y="373.500" width="161" height="39" rx="3"/><rect x="866.500" y="373.500" width="162" height="39" rx="3"/><rect x="1034.500" y="373.500" width="162" height="39" rx="3"/>
<rect x="1202.500" y="373.500" width="162" height="39" rx="3" fill="#f8cbad" stroke="#909090"/>
<rect x="364.500" y="418.500" width="161" height="39" rx="3"/><rect x="531.500" y="418.500" width="161" height="39" rx="3"/><rect x="698.500" y="418.500" width="161" height="39" rx="3"/><rect x="866.500" y="418.500" width="162" height="39" rx="3"/><rect x="1034.500" y="418.500" width="162" height="39" rx="3"/>
<rect x="1202.500" y="418.500" width="162" height="39" rx="3" stroke="#e2e2e2"/>
</g>
<text class="v" x="378" y="402" textLength="85" lengthAdjust="spacingAndGlyphs">January</text>
<text class="v" x="545" y="402" textLength="97" lengthAdjust="spacingAndGlyphs">February</text>
<text class="v" x="712" y="402" textLength="65" lengthAdjust="spacingAndGlyphs">March</text>
<text class="v" x="880" y="402" textLength="49" lengthAdjust="spacingAndGlyphs">April</text>
<text class="v" x="1049" y="402" textLength="43" lengthAdjust="spacingAndGlyphs">May</text>
<text class="v" x="1215" y="402" textLength="52" lengthAdjust="spacingAndGlyphs">June</text>
<text class="v" x="378" y="447" textLength="42" lengthAdjust="spacingAndGlyphs">July</text>
<text class="v" x="545" y="447" textLength="77" lengthAdjust="spacingAndGlyphs">August</text>
<text class="v" x="712" y="447" textLength="121" lengthAdjust="spacingAndGlyphs">September</text>
<text class="v" x="880" y="447" textLength="86" lengthAdjust="spacingAndGlyphs">October</text>
<text class="v" x="1048" y="447" textLength="111" lengthAdjust="spacingAndGlyphs">November</text>
<text class="v" x="1216" y="447" textLength="111" lengthAdjust="spacingAndGlyphs" style="fill:#808080">December</text>

<!-- Duration slicer -->
<rect x="897.500" y="479.500" width="478" height="208" fill="#fff" stroke="#a6a6a6" stroke-width="1.300"/>
<text class="b" x="912" y="509" textLength="107" lengthAdjust="spacingAndGlyphs">Duration</text>
<use href="#ck" x="1290" y="492"/><use href="#fx" x="1335" y="489"/>
<rect x="911" y="521" width="451" height="1" fill="#a6a6a6"/>
<g fill="#fff" stroke="#c8c8c8">
<rect x="910.500" y="529.500" width="146" height="39" rx="3"/><rect x="1062.500" y="529.500" width="146" height="39" rx="3"/><rect x="1214.500" y="529.500" width="147" height="39" rx="3"/>
<rect x="910.500" y="574.500" width="146" height="39" rx="3"/><rect x="1062.500" y="574.500" width="146" height="39" rx="3"/><rect x="1214.500" y="574.500" width="147" height="39" rx="3"/>
<rect x="910.500" y="619.500" width="146" height="39" rx="3"/><rect x="1062.500" y="619.500" width="146" height="39" rx="3"/><rect x="1214.500" y="619.500" width="147" height="39" rx="3" fill="#d9d9d9" stroke="#909090"/>
</g>
<text class="v" x="924" y="558">1</text><text class="v" x="1076" y="558">2</text><text class="v" x="1228" y="558">3</text>
<text class="v" x="924" y="603">4</text><text class="v" x="1076" y="603">5</text><text class="v" x="1228" y="603">6</text>
<text class="v" x="924" y="648">7</text><text class="v" x="1076" y="648">8</text><text class="v" x="1228" y="648">9</text>

<!-- v scrollbar -->
<rect x="1891" y="289" width="29" height="664" fill="#e6e6e6"/>
<rect x="1893.500" y="291.500" width="23" height="24" fill="#fff" stroke="#c6c6c6"/><path d="M1899 307h11l-5.500-7z" fill="#666"/>
<rect x="1893.500" y="317.500" width="23" height="587" fill="#fff" stroke="#ababab"/>
<rect x="1893.500" y="930.500" width="23" height="24" fill="#fff" stroke="#c6c6c6"/><path d="M1899 939h11l-5.500 7z" fill="#666"/>

<!-- tab bar -->
<rect y="953" width="1920" height="34" fill="#e6e6e6"/>
<rect y="953" width="1891" height="1" fill="#a6a6a6"/><rect y="987" width="1920" height="2" fill="#d2d2d2"/>
<path d="M35 964l-6 6 6 6zM64 964l6 6-6 6z" fill="#c4c4c4"/>
<rect x="118" y="957" width="1" height="26" fill="#a6a6a6"/><rect x="192" y="957" width="1" height="26" fill="#a6a6a6"/>
<text class="u" x="132" y="975" textLength="46" lengthAdjust="spacingAndGlyphs">Input</text>
<text class="u" x="210" y="975" textLength="117" lengthAdjust="spacingAndGlyphs">Bridge Tables</text>
<rect x="345" y="953" width="90" height="31" fill="#fff"/><rect x="345" y="982" width="90" height="2" fill="#217346"/><rect x="345" y="953" width="1" height="30" fill="#a6a6a6"/><rect x="435" y="953" width="1" height="30" fill="#a6a6a6"/>
<text x="357" y="975" style="font:bold 18px 'Liberation Sans',sans-serif;fill:#217346" textLength="67" lengthAdjust="spacingAndGlyphs">Output</text>
<circle cx="486" cy="970" r="10.500" fill="none" stroke="#888" stroke-width="1.500"/><path d="M480 970h12M486 964v12" stroke="#888" stroke-width="1.500"/>
<g fill="#b0b0b0"><rect x="1148" y="962" width="3" height="3"/><rect x="1148" y="969" width="3" height="3"/><rect x="1148" y="976" width="3" height="3"/></g>
<rect x="1168" y="957" width="723" height="25" fill="#d9d9d9"/>
<rect x="1168.500" y="957.500" width="25" height="25" fill="#fff" stroke="#e2e2e2"/><path d="M1183 964l-6 6 6 6z" fill="#666"/>
<rect x="1193.500" y="957.500" width="620" height="24" fill="#fff" stroke="#ababab"/>
<rect x="1866.500" y="957.500" width="25" height="25" fill="#fff" stroke="#e2e2e2"/><path d="M1876 964l6 6-6 6z" fill="#666"/>

<!-- status bar -->
<rect y="989" width="1920" height="31" fill="#f3f3f3"/>
<text class="u" x="7" y="1009" textLength="43" lengthAdjust="spacingAndGlyphs">Ready</text>
<circle cx="77" cy="998" r="5" fill="#555"/><rect x="80" y="996" width="12" height="5" fill="#555"/><rect x="75.500" y="1002.500" width="16" height="9" fill="#fff" stroke="#777"/>
<path d="M78 1005h11M78 1008h11" stroke="#777" stroke-dasharray="2 1"/>
<rect x="1536" y="989" width="45" height="31" fill="#c6c6c6"/>
<path d="M1549.500 995.500h19v19h-19zM1556 995v20M1562 995v20M1549 1002h20M1549 1008h20" fill="none" stroke="#666"/>
<path d="M1594.500 995.500h18v19h-18zM1599 999h9v11h-9zM1601 1002h5M1601 1005h5" fill="none" stroke="#666"/>
<path d="M1639.500 995.500h18v19h-18zM1639 1009h18M1649 995v14" fill="none" stroke="#666"/>
<rect x="1677" y="1002" width="11" height="3" fill="#777"/>
<rect x="1694" y="1002" width="148" height="3" fill="#a8a8a8"/><rect x="1764" y="995" width="8" height="17" fill="#6f6f6f"/>
<rect x="1848" y="1002" width="12" height="3" fill="#777"/><rect x="1853" y="997" width="2" height="13" fill="#777"/>
<text class="u" x="1873" y="1009" textLength="40" lengthAdjust="spacingAndGlyphs">100%</text>

<!-- taskbar -->
<defs><linearGradient id="tb" x1="0" x2="1" y1="0" y2="0"><stop offset="0" stop-color="#1a2739"/><stop offset=".25" stop-color="#1a2739"/><stop offset=".45" stop-color="#0e1832"/><stop offset="1" stop-color="#0f1a33"/></linearGradient></defs>
<rect y="1020" width="1920" height="60" fill="url(#tb)"/>
<rect x="446" y="1020" width="73" height="60" fill="#3f485b"/>
<g fill="#a9c0f0"><rect x="227" y="1077" width="61" height="3"/><rect x="377" y="1077" width="61" height="3"/><rect x="446" y="1077" width="73" height="3"/><rect x="827" y="1077" width="61" height="3"/></g>
<path d="M24 1041l11-1.500v10.500h-11zM36.500 1039l11.500-1.500v12.500h-11.500zM24 1051.500h11v10.500l-11-1.500zM36.500 1051.500h11.500v11.500l-11.500-1.500z" fill="#fff"/>
<ellipse cx="108" cy="1050" rx="10" ry="11" fill="none" stroke="#ddd" stroke-width="3"/>
<g fill="none" stroke="#fff" stroke-width="1.300"><path d="M169 1042v-4h14v4M168.500 1044.500h15v15h-15zM169 1065v-4h14v4"/><path d="M190 1043v-5M190 1065v-11"/></g><rect x="188" y="1045" width="4" height="5" fill="#fff"/>
<path d="M243 1052c0-12 10-20 19-17 7 2 10 8 10 16h-20c0 7 9 11 19 5v8c-10 5-24 2-25-9-1 0-3-1-3-3zM252 1045h10c0-6-8-7-10 0z" fill="#0c78d6" fill-rule="evenodd"/>
<path d="M316 1045h32v20h-32z" fill="#fde88e"/><path d="M316 1045v-8h12l3 3h14v5z" fill="#f0c64c"/><rect x="318" y="1038" width="8" height="2" fill="#fff"/>
<path d="M326 1065v-9l6-5 6 5v9z" fill="#2b9bd8"/><rect x="329" y="1058" width="6" height="7" fill="#fde88e"/>
<path d="M391 1038l18-4v32l-18-4z" fill="#0f72c4"/><rect x="409" y="1041" width="14" height="20" fill="#2b8fd9"/><path d="M411 1044h10v14h-10zM411 1044l5 7 5-7" fill="#fff" stroke="#2b8fd9"/>
<ellipse cx="400" cy="1050" rx="4" ry="6" fill="none" stroke="#fff" stroke-width="2.500"/>
<path d="M466 1038l17-4v34l-17-4z" fill="#1e7145"/><rect x="482" y="1037" width="15" height="28" fill="#d6e8dd"/><path d="M484 1042h11M484 1047h11M484 1052h11M484 1057h11M489 1038v26" stroke="#1e7145" stroke-width="2"/>
<text x="470" y="1057" style="font:bold 17px 'Liberation Sans',sans-serif;fill:#fff" textLength="10" lengthAdjust="spacingAndGlyphs">X</text>
<path d="M541 1037l18-4v33l-18-4z" fill="#2b579a"/><rect x="557" y="1037" width="15" height="26" fill="#2b579a"/><rect x="559" y="1039" width="11" height="22" fill="#fff"/><path d="M560 1043h9M560 1047h9M560 1051h9M560 1055h9M560 1059h9" stroke="#2b579a" stroke-width="2"/>
<text x="544" y="1057" style="font:bold 17px 'Liberation Sans',sans-serif;fill:#fff" textLength="13" lengthAdjust="spacingAndGlyphs">W</text>
<path d="M623 1035l20 3-3 25-26-6z" fill="#7fb6c2"/><path d="M640 1063l3-25 3 1-3 25z" fill="#b09260"/><path d="M623 1034l20 3" stroke="#ddd" stroke-width="3" stroke-dasharray="2 1"/>
<ellipse cx="706" cy="1052" rx="16" ry="15" fill="#dfeaf3"/><circle cx="699" cy="1046" r="3" fill="#76b852"/><circle cx="707" cy="1043" r="3" fill="#e0a13a"/><circle cx="696" cy="1054" r="3" fill="#d9583b"/><path d="M706 1067l15-34" stroke="#e08a2c" stroke-width="3"/>
<rect x="764" y="1032" width="36" height="36" fill="#f2c811"/><rect x="770" y="1040" width="24" height="20" rx="3" fill="none" stroke="#222" stroke-width="1.500"/><path d="M776 1057v-5M781 1057v-9M786 1057v-13M790 1057v-7" stroke="#111" stroke-width="3"/>
<rect x="843" y="1036" width="27" height="28" fill="#ffe600"/><path d="M857 1064l13-13v13z" fill="#111"/>
<g fill="none" stroke="#fff" stroke-width="1.400">
<circle cx="1293" cy="1041" r="4"/><path d="M1286 1052c1-4 3-6 7-6s7 3 7 9"/><circle cx="1283" cy="1052" r="4"/><path d="M1278 1063c0-4 2-6 5-6s6 2 6 6"/>
<path d="M1339 1052l8-9 8 9"/>
<path d="M1482 1040v5h8v-5M1486 1045v7M1492 1046h13v15h-19v-9"/>
<path d="M1533 1062c0-10 6-18 16-19M1538 1062c0-7 4-12 10-13M1543 1062c0-3 2-6 5-7"/>
<path d="M1578 1046h5l6-6v22l-6-6h-5z"/><path d="M1593 1044c2 4 2 10 0 14" opacity=".7"/><path d="M1597 1041c3 6 3 14 0 20" opacity=".35"/>
<path d="M1633 1062c0-6 4-8 8-12l7-10c3 0 3 3 2 5l-8 12c-3 4-8 8-9 5zM1638 1050c4-3 9-2 12 3"/>
<path d="M1858.500 1038.500h24v21h-7l-5 5-5-5h-7z"/>
</g>
<rect x="1490" y="1048" width="13" height="11" fill="#fff"/><rect x="1548" y="1060" width="3" height="3" fill="#fff"/>
<path d="M1384 1060c-1-4 2-6 4-6 0-6 3-9 7-9 3-3 7-1 8 4 4 0 6 3 6 6s-2 5-5 5z" fill="#0e74cf"/>
<path d="M1432 1060c-1-4 2-6 4-6 0-6 3-9 7-9 3-3 7-1 8 4 4 0 6 3 6 6s-2 5-5 5z" fill="#fff"/>
<text class="t" x="1683" y="1044" textLength="33" lengthAdjust="spacingAndGlyphs">ENG</text>
<text class="t" x="1689" y="1071" textLength="21" lengthAdjust="spacingAndGlyphs">US</text>
<text class="t" x="1762" y="1044" textLength="43" lengthAdjust="spacingAndGlyphs">16:48</text>
<text class="t" x="1735" y="1071" textLength="95" lengthAdjust="spacingAndGlyphs">04-01-2019</text>
</svg>
</body></html>
